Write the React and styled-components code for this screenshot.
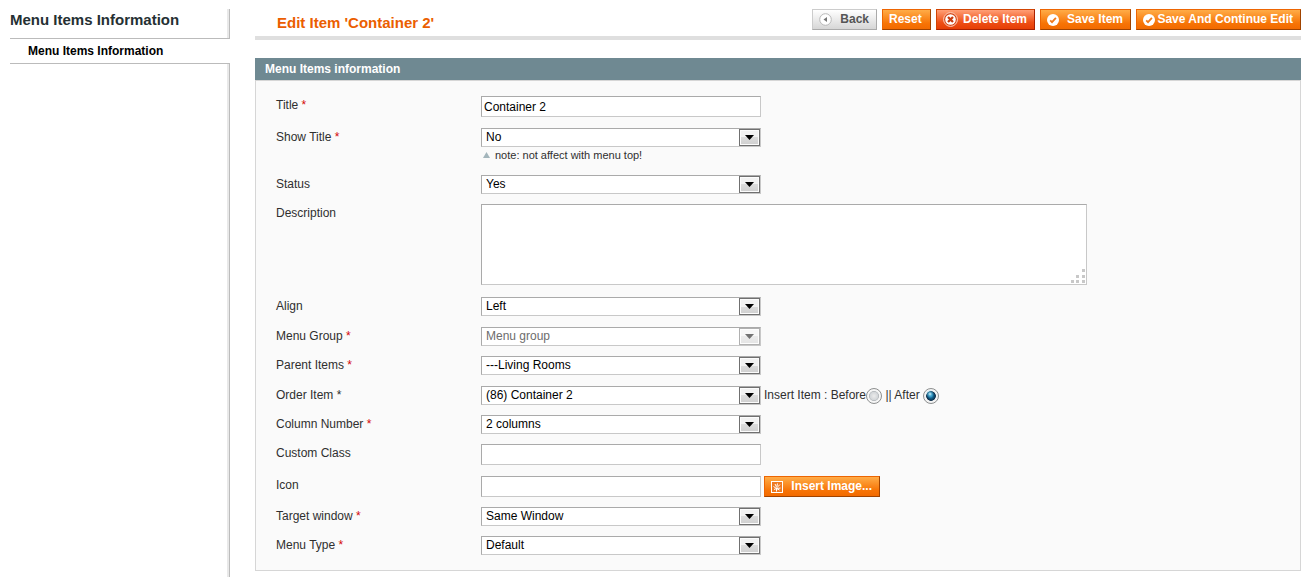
import React, { useState } from 'react';
import styled, { createGlobalStyle, css } from 'styled-components';

const GlobalStyle = createGlobalStyle`
  * { box-sizing: border-box; }
  body {
    margin: 0;
    background: #fff;
    color: #2f2f2f;
    font: 12px/18px "Liberation Sans", Arial, sans-serif;
  }
`;

const Page = styled.div`
  display: flex;
  gap: 25px;
  min-height: 100vh;
  padding: 9px 4px 0 10px;
`;

const Sidebar = styled.nav`
  flex: 0 0 220px;
  display: flex;
  flex-direction: column;
`;

const edge = css`
  border-right: 1px solid #bcbcbc;
  box-shadow: inset -2px 0 0 #e9e9e9;
`;

const SidebarTitle = styled.h3`
  ${edge}
  height: 29px;
  margin: 0;
  font-size: 15px;
  line-height: 22px;
  color: #253033;
`;

const SidebarLink = styled.a`
  height: 26px;
  padding-left: 18px;
  border-top: 1px solid #bbb;
  border-bottom: 1px solid #bbb;
  color: #000;
  font-weight: bold;
  line-height: 24px;
  text-decoration: none;
`;

const SidebarRest = styled.div`
  ${edge}
  flex: 1;
`;

const Content = styled.main`
  flex: 1;
  min-width: 0;
`;

const Header = styled.header`
  display: flex;
  justify-content: space-between;
  height: 31px;
  padding-left: 22px;
  border-bottom: 4px solid #dfdfdf;
`;

const PageTitle = styled.h1`
  margin: 0;
  color: #eb5e00;
  font-size: 15px;
  line-height: 28px;
`;

const Toolbar = styled.div`
  display: flex;
  align-items: flex-start;
  gap: 5px;
`;

const tones = {
  back: css`
    border-color: #ccc #aaa #aaa #ccc;
    background: linear-gradient(#fff, #d6d6d6);
    color: #555;
  `,
  normal: css`
    border-color: #ed6502 #a04300 #a04300 #ed6502;
    background: linear-gradient(#ffac47, #f77406 70%, #f26a00);
    color: #fff;
  `,
  danger: css`
    border-color: #d24403 #a92000 #a92000 #d24403;
    background: linear-gradient(#ff9f76, #ee4f16 65%, #e63e05);
    color: #fff;
  `,
};

const Button = styled.button`
  display: inline-flex;
  align-items: center;
  justify-content: space-between;
  gap: 2px;
  min-width: ${(p) => p.$width}px;
  height: 21px;
  padding: 0 7px 0 6px;
  border: 1px solid;
  font: bold 12px/18px "Liberation Sans", Arial, sans-serif;
  white-space: nowrap;
  cursor: pointer;
  ${(p) => tones[p.$tone || 'normal']}
`;

const ButtonText = styled.span`
  height: 19px;
`;

const Panel = styled.section`
  margin-top: 18px;
`;

const PanelTitle = styled.h2`
  height: 22px;
  margin: 0;
  padding: 0 10px;
  background: #6f8992;
  color: #fff;
  font-size: 12px;
  line-height: 22px;
`;

const Form = styled.form`
  padding: 15px 20px;
  border: 1px solid #d6d6d6;
  background: #fafafa;
`;

const gaps = { small: 10, medium: 11, large: 12 };

const Row = styled.div`
  display: grid;
  grid-template-columns: 205px 1fr;
  align-items: start;
  margin-bottom: ${(p) => gaps[p.$gap || 'small']}px;
  &:last-child { margin-bottom: 0; }
`;

const Label = styled.label`
  line-height: 19px;
`;

const Star = styled.span`
  color: #d40707;
`;

const Control = styled.div`
  display: flex;
  align-items: flex-start;
  gap: 3px;
`;

const field = css`
  border: 1px solid;
  border-color: #aaa #c8c8c8 #c8c8c8 #aaa;
  border-radius: 0;
  background: #fff;
  color: #000;
  font: 12px/17px "Liberation Sans", Arial, sans-serif;
`;

const Input = styled.input`
  ${field}
  width: 280px;
  height: 21px;
  padding: 0 2px;
`;

const SelectBox = styled.span`
  position: relative;
  width: 280px;
  height: 19px;
`;

const NativeSelect = styled.select`
  ${field}
  display: block;
  appearance: none;
  width: 100%;
  height: 19px;
  padding: 0 24px 0 4px;
  &:disabled { color: #6d6d6d; opacity: 1; }
`;

const ArrowBox = styled.span`
  position: absolute;
  top: 1px;
  right: 1px;
  display: grid;
  place-items: center;
  width: 21px;
  height: 17px;
  border: 1px solid #707070;
  background: linear-gradient(#f2f2f2 50%, #dcdcdc 50%, #cfcfcf);
  box-shadow: inset 0 0 0 1px #fcfcfc;
  pointer-events: none;
  opacity: ${(p) => (p.$disabled ? 0.55 : 1)};
`;

const Note = styled.p`
  display: flex;
  align-items: center;
  gap: 5px;
  margin: 0;
  padding: 0 0 2px 2px;
  height: 18px;
  font-size: 11px;
  line-height: 16px;
`;

const TextareaBox = styled.span`
  position: relative;
  display: block;
  max-width: 606px;
  height: 81px;
`;

const Textarea = styled.textarea`
  ${field}
  display: block;
  width: 100%;
  height: 100%;
  padding: 2px;
  resize: none;
`;

const Grip = styled.svg`
  position: absolute;
  right: 1px;
  bottom: 1px;
  pointer-events: none;
`;

const Placement = styled.div`
  display: flex;
  align-items: center;
  line-height: 17px;
  white-space: pre;
`;

const Radio = styled.input`
  appearance: none;
  width: 16px;
  height: 16px;
  margin: 2px 0 0;
  border: 1px solid #8d8f8f;
  border-radius: 50%;
  background: radial-gradient(circle closest-side, #ececec 0, #d2d5d8 58%, #b4b8bb 66%, #f6f6f6 76%);
  &:checked {
    background:
      radial-gradient(circle at 6px 5px, #d4f3fc 0, #5cc4ea99 2px, transparent 4px),
      radial-gradient(circle closest-side, #2b93c4 0, #0e547c 40%, #10304c 64%, #f4f4f4 74%);
  }
`;

const BackIcon = () => (
  <svg width="13" height="13" viewBox="0 0 13 13" aria-hidden="true">
    <circle cx="6.5" cy="6.5" r="5.8" fill="#fff" stroke="#b9b9b9" />
    <path d="M8 4v5L4.5 6.5z" fill="#777" />
  </svg>
);

const DeleteIcon = () => (
  <svg width="15" height="15" viewBox="0 0 15 15" aria-hidden="true">
    <circle cx="7.5" cy="7.5" r="6.9" fill="#d64515" stroke="#ffd3c0" />
    <circle cx="7.5" cy="7.5" r="5.3" fill="#fff" />
    <path d="M5 5l5 5M10 5l-5 5" stroke="#c73a10" strokeWidth="2.3" />
  </svg>
);

const SaveIcon = () => (
  <svg width="12" height="12" viewBox="0 0 12 12" aria-hidden="true">
    <circle cx="6" cy="6" r="6" fill="#fff" />
    <path d="M3.2 6.4l1.8 1.7 3.9-4.3" fill="none" stroke="#ef7a1c" strokeWidth="1.8" />
  </svg>
);

const ImageIcon = () => (
  <svg width="12" height="12" viewBox="0 0 12 12" aria-hidden="true">
    <rect x=".5" y=".5" width="11" height="11" fill="#ee7a22" stroke="#fff" />
    <path d="M5.5 10.5V7l3.500-3.500M2.500 5.500l3 2 4-.5M4 3l1.500 3M6.500 2.500L6 5M3 8.500l2.500-1 3 1.500" fill="none" stroke="#fff" />
  </svg>
);

const Required = () => <Star> *</Star>;

function Field({ id, label, required, plainStar, gap, children }) {
  return (
    <Row $gap={gap}>
      <Label htmlFor={id}>
        {label}
        {required && <Required />}
        {plainStar && ' *'}
      </Label>
      <div>{children}</div>
    </Row>
  );
}

function Select({ id, value, disabled }) {
  return (
    <SelectBox>
      <NativeSelect id={id} disabled={disabled} defaultValue={value}>
        <option>{value}</option>
      </NativeSelect>
      <ArrowBox $disabled={disabled}>
        <svg width="9" height="5" viewBox="0 0 9 5" aria-hidden="true">
          <path d="M0 0h9L4.5 5z" fill="#000" />
        </svg>
      </ArrowBox>
    </SelectBox>
  );
}

const gripDots = [[11, 0], [5, 6], [11, 6], [0, 11], [5, 11], [11, 11]];

export default function App() {
  const [place, setPlace] = useState('after');
  return (
    <>
      <GlobalStyle />
      <Page>
        <Sidebar>
          <SidebarTitle>Menu Items Information</SidebarTitle>
          <SidebarLink href="#information">Menu Items Information</SidebarLink>
          <SidebarRest />
        </Sidebar>
        <Content>
          <Header>
            <PageTitle>Edit Item 'Container 2'</PageTitle>
            <Toolbar>
              <Button type="button" $width={65} $tone="back"><BackIcon /><ButtonText>Back</ButtonText></Button>
              <Button type="button" $width={49}><ButtonText>Reset</ButtonText></Button>
              <Button type="button" $width={99} $tone="danger"><DeleteIcon /><ButtonText>Delete Item</ButtonText></Button>
              <Button type="button" $width={91}><SaveIcon /><ButtonText>Save Item</ButtonText></Button>
              <Button type="button" $width={165}><SaveIcon /><ButtonText>Save And Continue Edit</ButtonText></Button>
            </Toolbar>
          </Header>
          <Panel id="information">
            <PanelTitle>Menu Items information</PanelTitle>
            <Form>
              <Field id="title" label="Title" required gap="medium">
                <Control><Input id="title" type="text" defaultValue="Container 2" /></Control>
              </Field>
              <Field id="show-title" label="Show Title" required>
                <Control><Select id="show-title" value="No" /></Control>
                <Note>
                  <svg width="7" height="6" viewBox="0 0 7 6" aria-hidden="true">
                    <path d="M3.5 0L7 6H0z" fill="#a3b5bb" />
                  </svg>
                  note: not affect with menu top!
                </Note>
              </Field>
              <Field id="status" label="Status">
                <Control><Select id="status" value="Yes" /></Control>
              </Field>
              <Field id="description" label="Description" gap="large">
                <TextareaBox>
                  <Textarea id="description" />
                  <Grip width="16" height="16" viewBox="0 0 16 16" aria-hidden="true">
                    {gripDots.map(([x, y]) => (
                      <rect key={`${x}-${y}`} x={x + 1} y={y + 1} width="3" height="3" fill="#c8c8c8" />
                    ))}
                  </Grip>
                </TextareaBox>
              </Field>
              <Field id="align" label="Align" gap="medium">
                <Control><Select id="align" value="Left" /></Control>
              </Field>
              <Field id="menu-group" label="Menu Group" required>
                <Control><Select id="menu-group" value="Menu group" disabled /></Control>
              </Field>
              <Field id="parent" label="Parent Items" required gap="medium">
                <Control><Select id="parent" value="---Living Rooms" /></Control>
              </Field>
              <Field id="order" label="Order Item" plainStar>
                <Control>
                  <Select id="order" value="(86) Container 2" />
                  <Placement>
                    <label htmlFor="before">Insert Item : Before</label>
                    <Radio id="before" type="radio" name="place" checked={place === 'before'} onChange={() => setPlace('before')} />
                    <label htmlFor="after"> || After </label>
                    <Radio id="after" type="radio" name="place" checked={place === 'after'} onChange={() => setPlace('after')} />
                  </Placement>
                </Control>
              </Field>
              <Field id="columns" label="Column Number" required>
                <Control><Select id="columns" value="2 columns" /></Control>
              </Field>
              <Field id="custom-class" label="Custom Class" gap="medium">
                <Control><Input id="custom-class" type="text" /></Control>
              </Field>
              <Field id="icon" label="Icon">
                <Control>
                  <Input id="icon" type="text" />
                  <Button type="button" $width={116}><ImageIcon /><ButtonText>Insert Image...</ButtonText></Button>
                </Control>
              </Field>
              <Field id="target" label="Target window" required>
                <Control><Select id="target" value="Same Window" /></Control>
              </Field>
              <Field id="menu-type" label="Menu Type" required>
                <Control><Select id="menu-type" value="Default" /></Control>
              </Field>
            </Form>
          </Panel>
        </Content>
      </Page>
    </>
  );
}
